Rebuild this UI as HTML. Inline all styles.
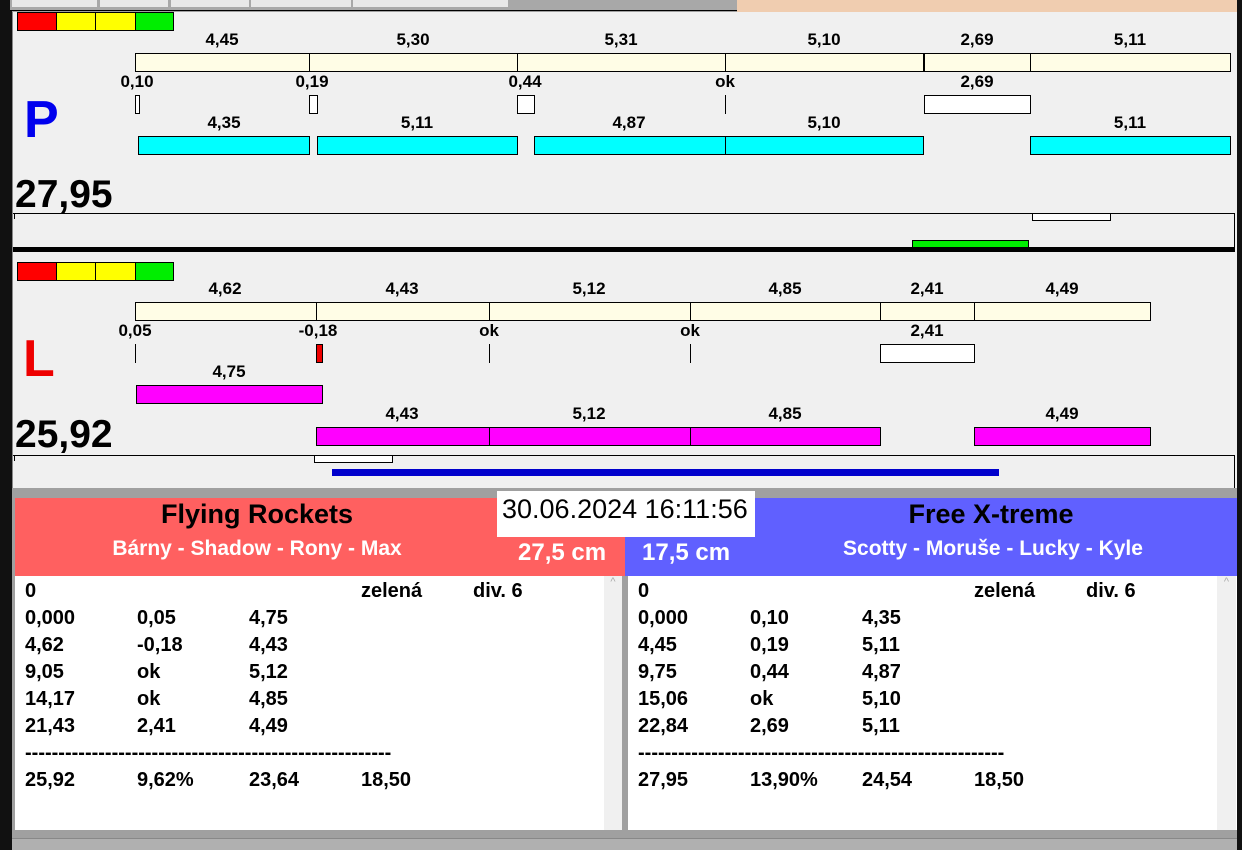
<!DOCTYPE html>
<html><head><meta charset="utf-8"><style>
*{margin:0;padding:0;box-sizing:border-box}
body{width:1242px;height:850px;position:relative;overflow:hidden;background:#a0a0a0;font-family:"Liberation Sans",Arial,sans-serif}
div{position:absolute}
.t{font-weight:bold;font-size:17px;transform:translateX(-50%);white-space:nowrap;line-height:18px}
.cy{background:#00ffff;border:1px solid #000}
.mg{background:#ff00ff;border:1px solid #000}
.cr{background:#fffde6;border:1px solid #000}
.w{background:#fff;border:1px solid #000}
.ln{font-weight:bold;font-size:20px;line-height:27px;white-space:pre}
.ln span{position:absolute}
</style></head><body>
<div style="left:0;top:0;width:12px;height:850px;background:#111"></div>
<div style="left:1237px;top:0;width:5px;height:850px;background:#111"></div>
<div style="left:10px;top:0;width:727px;height:11px;background:#a8a8a8;border-bottom:1px solid #000"></div>
<div style="left:12px;top:0;width:85px;height:7px;background:#e8e8e8"></div>
<div style="left:100px;top:0;width:68px;height:7px;background:#e8e8e8"></div>
<div style="left:171px;top:0;width:78px;height:7px;background:#e8e8e8"></div>
<div style="left:251px;top:0;width:100px;height:7px;background:#e8e8e8"></div>
<div style="left:353px;top:0;width:155px;height:7px;background:#e8e8e8"></div>
<div style="left:737px;top:0;width:500px;height:12px;background:#f0cdb0"></div>
<div style="left:12px;top:12px;width:1225px;height:476px;background:#f0f0f0;border-left:1px solid #888"></div>
<div style="left:17px;top:12px;width:40px;height:19px;background:#f00;border:1px solid #000"></div>
<div style="left:56px;top:12px;width:40px;height:19px;background:#ff0;border:1px solid #000"></div>
<div style="left:95px;top:12px;width:41px;height:19px;background:#ff0;border:1px solid #000"></div>
<div style="left:135px;top:12px;width:39px;height:19px;background:#0e0;border:1px solid #000"></div>

<div class="t" style="left:222px;top:31px">4,45</div>
<div class="t" style="left:413px;top:31px">5,30</div>
<div class="t" style="left:621px;top:31px">5,31</div>
<div class="t" style="left:824px;top:31px">5,10</div>
<div class="t" style="left:977px;top:31px">2,69</div>
<div class="t" style="left:1130px;top:31px">5,11</div>
<div class="cr" style="left:135px;top:53px;width:175px;height:19px"></div>
<div class="cr" style="left:309px;top:53px;width:209px;height:19px"></div>
<div class="cr" style="left:517px;top:53px;width:209px;height:19px"></div>
<div class="cr" style="left:725px;top:53px;width:200px;height:19px"></div>
<div class="cr" style="left:923px;top:53px;width:108px;height:19px;border-left-width:2px"></div>
<div class="cr" style="left:1030px;top:53px;width:201px;height:19px"></div>
<div class="t" style="left:137px;top:73px">0,10</div>
<div class="t" style="left:312px;top:73px">0,19</div>
<div class="t" style="left:525px;top:73px">0,44</div>
<div class="t" style="left:725px;top:73px">ok</div>
<div class="t" style="left:977px;top:73px">2,69</div>
<div class="w" style="left:135px;top:95px;width:5px;height:19px"></div>
<div class="w" style="left:309px;top:95px;width:9px;height:19px"></div>
<div class="w" style="left:517px;top:95px;width:18px;height:19px"></div>
<div style="left:725px;top:95px;width:1px;height:19px;background:#000"></div>
<div class="w" style="left:924px;top:95px;width:107px;height:19px"></div>
<div style="left:24px;top:92px;font-size:52px;font-weight:bold;color:#0000ee;line-height:56px">P</div>
<div class="t" style="left:224px;top:114px">4,35</div>
<div class="t" style="left:417px;top:114px">5,11</div>
<div class="t" style="left:629px;top:114px">4,87</div>
<div class="t" style="left:824px;top:114px">5,10</div>
<div class="t" style="left:1130px;top:114px">5,11</div>
<div class="cy" style="left:138px;top:136px;width:172px;height:19px"></div>
<div class="cy" style="left:317px;top:136px;width:201px;height:19px"></div>
<div class="cy" style="left:534px;top:136px;width:192px;height:19px"></div>
<div class="cy" style="left:725px;top:136px;width:199px;height:19px"></div>
<div class="cy" style="left:1030px;top:136px;width:201px;height:19px"></div>
<div style="left:15px;top:174px;font-size:39px;font-weight:bold;line-height:42px">27,95</div>
<div style="left:13px;top:213px;width:1222px;height:34px;border-top:1px solid #000;border-right:1px solid #000"></div>
<div style="left:14px;top:213px;width:1px;height:6px;background:#000"></div>
<div class="w" style="left:1032px;top:213px;width:79px;height:8px"></div>
<div style="left:912px;top:240px;width:117px;height:7px;background:#0e0;border:1px solid #000;border-bottom:none"></div>
<div style="left:13px;top:247px;width:1222px;height:5px;background:#000"></div>
<div style="left:17px;top:262px;width:40px;height:19px;background:#f00;border:1px solid #000"></div>
<div style="left:56px;top:262px;width:40px;height:19px;background:#ff0;border:1px solid #000"></div>
<div style="left:95px;top:262px;width:41px;height:19px;background:#ff0;border:1px solid #000"></div>
<div style="left:135px;top:262px;width:39px;height:19px;background:#0e0;border:1px solid #000"></div>
<div class="t" style="left:225px;top:280px">4,62</div>
<div class="t" style="left:402px;top:280px">4,43</div>
<div class="t" style="left:589px;top:280px">5,12</div>
<div class="t" style="left:785px;top:280px">4,85</div>
<div class="t" style="left:927px;top:280px">2,41</div>
<div class="t" style="left:1062px;top:280px">4,49</div>
<div class="cr" style="left:135px;top:302px;width:182px;height:19px"></div>
<div class="cr" style="left:316px;top:302px;width:174px;height:19px"></div>
<div class="cr" style="left:489px;top:302px;width:202px;height:19px"></div>
<div class="cr" style="left:690px;top:302px;width:191px;height:19px"></div>
<div class="cr" style="left:880px;top:302px;width:95px;height:19px"></div>
<div class="cr" style="left:974px;top:302px;width:177px;height:19px"></div>
<div class="t" style="left:135px;top:322px">0,05</div>
<div class="t" style="left:318px;top:322px">-0,18</div>
<div class="t" style="left:489px;top:322px">ok</div>
<div class="t" style="left:690px;top:322px">ok</div>
<div class="t" style="left:927px;top:322px">2,41</div>
<div style="left:135px;top:344px;width:1px;height:19px;background:#000"></div>
<div style="left:316px;top:344px;width:7px;height:19px;background:#e00;border:1px solid #000"></div>
<div style="left:489px;top:344px;width:1px;height:19px;background:#000"></div>
<div style="left:690px;top:344px;width:1px;height:19px;background:#000"></div>
<div class="w" style="left:880px;top:344px;width:95px;height:19px"></div>
<div style="left:23px;top:331px;font-size:52px;font-weight:bold;color:#ee0000;line-height:56px">L</div>
<div class="t" style="left:229px;top:363px">4,75</div>
<div class="mg" style="left:136px;top:385px;width:187px;height:19px"></div>
<div class="t" style="left:402px;top:405px">4,43</div>
<div class="t" style="left:589px;top:405px">5,12</div>
<div class="t" style="left:785px;top:405px">4,85</div>
<div class="t" style="left:1062px;top:405px">4,49</div>
<div class="mg" style="left:316px;top:427px;width:174px;height:19px"></div>
<div class="mg" style="left:489px;top:427px;width:202px;height:19px"></div>
<div class="mg" style="left:690px;top:427px;width:191px;height:19px"></div>
<div class="mg" style="left:974px;top:427px;width:177px;height:19px"></div>
<div style="left:15px;top:414px;font-size:39px;font-weight:bold;line-height:42px">25,92</div>
<div style="left:13px;top:455px;width:1222px;height:33px;border-top:1px solid #000;border-right:1px solid #000"></div>
<div style="left:14px;top:455px;width:1px;height:6px;background:#000"></div>
<div class="w" style="left:314px;top:455px;width:79px;height:8px"></div>
<div style="left:332px;top:469px;width:667px;height:7px;background:#0000cc"></div>
<div style="left:12px;top:488px;width:1225px;height:362px;background:#a0a0a0"></div>
<div style="left:15px;top:498px;width:610px;height:78px;background:#ff6060"></div>
<div style="left:625px;top:498px;width:612px;height:78px;background:#6060ff"></div>
<div style="left:497px;top:491px;width:258px;height:46px;background:#fff"></div>
<div style="left:502px;top:493px;font-size:27px;line-height:32px">30.06.2024 16:11:56</div>
<div class="t" style="left:257px;top:499px;font-size:27px;line-height:30px">Flying Rockets</div>
<div class="t" style="left:257px;top:537px;font-size:21px;line-height:24px;color:#fff">Bárny - Shadow - Rony - Max</div>
<div style="left:518px;top:539px;font-size:24px;font-weight:bold;color:#fff;line-height:28px">27,5 cm</div>
<div style="left:642px;top:539px;font-size:24px;font-weight:bold;color:#fff;line-height:28px">17,5 cm</div>
<div class="t" style="left:991px;top:499px;font-size:27px;line-height:30px">Free X-treme</div>
<div class="t" style="left:993px;top:537px;font-size:21px;line-height:24px;color:#fff">Scotty - Moruše - Lucky - Kyle</div>
<div style="left:15px;top:576px;width:607px;height:254px;background:#fff"></div>
<div style="left:604px;top:576px;width:18px;height:254px;background:#f0f0f0;color:#aaa;font-size:11px;text-align:center">^</div>
<div style="left:628px;top:576px;width:609px;height:254px;background:#fff"></div>
<div style="left:1217px;top:576px;width:19px;height:254px;background:#f0f0f0;color:#aaa;font-size:11px;text-align:center">^</div>
<div style="left:12px;top:838px;width:1225px;height:12px;background:#b0b0b0;border-top:1px solid #888"></div>

<div class="ln" style="left:25px;top:578px;width:590px;height:250px">
<span style="left:0;top:0">0</span><span style="left:336px;top:0">zelená</span><span style="left:448px;top:0">div. 6</span>
<span style="left:0;top:27px">0,000</span><span style="left:112px;top:27px">0,05</span><span style="left:224px;top:27px">4,75</span>
<span style="left:0;top:54px">4,62</span><span style="left:112px;top:54px">-0,18</span><span style="left:224px;top:54px">4,43</span>
<span style="left:0;top:81px">9,05</span><span style="left:112px;top:81px">ok</span><span style="left:224px;top:81px">5,12</span>
<span style="left:0;top:108px">14,17</span><span style="left:112px;top:108px">ok</span><span style="left:224px;top:108px">4,85</span>
<span style="left:0;top:135px">21,43</span><span style="left:112px;top:135px">2,41</span><span style="left:224px;top:135px">4,49</span>
<span style="left:0;top:162px">-------------------------------------------------------</span>
<span style="left:0;top:189px">25,92</span><span style="left:112px;top:189px">9,62%</span><span style="left:224px;top:189px">23,64</span><span style="left:336px;top:189px">18,50</span>
</div>
<div class="ln" style="left:638px;top:578px;width:580px;height:250px">
<span style="left:0;top:0">0</span><span style="left:336px;top:0">zelená</span><span style="left:448px;top:0">div. 6</span>
<span style="left:0;top:27px">0,000</span><span style="left:112px;top:27px">0,10</span><span style="left:224px;top:27px">4,35</span>
<span style="left:0;top:54px">4,45</span><span style="left:112px;top:54px">0,19</span><span style="left:224px;top:54px">5,11</span>
<span style="left:0;top:81px">9,75</span><span style="left:112px;top:81px">0,44</span><span style="left:224px;top:81px">4,87</span>
<span style="left:0;top:108px">15,06</span><span style="left:112px;top:108px">ok</span><span style="left:224px;top:108px">5,10</span>
<span style="left:0;top:135px">22,84</span><span style="left:112px;top:135px">2,69</span><span style="left:224px;top:135px">5,11</span>
<span style="left:0;top:162px">-------------------------------------------------------</span>
<span style="left:0;top:189px">27,95</span><span style="left:112px;top:189px">13,90%</span><span style="left:224px;top:189px">24,54</span><span style="left:336px;top:189px">18,50</span>
</div>
</body></html>
